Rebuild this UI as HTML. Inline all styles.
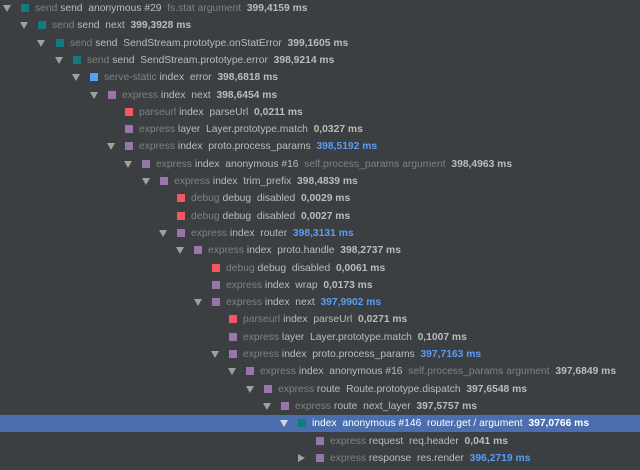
<!DOCTYPE html>
<html><head><meta charset="utf-8"><style>
html,body{margin:0;padding:0;background:#3c3f41;width:640px;height:470px;overflow:hidden}
body{font-family:"Liberation Sans",sans-serif;font-size:10.3px;color:#bbbbbb;position:relative}
.r{position:absolute;left:0;width:640px;height:17px;line-height:17px;white-space:pre}
.r.sel{background:#4b6eaf;color:#fff}
.t{position:absolute;top:5px;width:0;height:0;border-left:4px solid transparent;border-right:4px solid transparent;border-top:7px solid #a0a0a0}
.t.rt{top:4px;border-top:4px solid transparent;border-bottom:4px solid transparent;border-left:7px solid #a0a0a0;border-right:0}
.s{position:absolute;top:4px;width:8px;height:8px}
.x{position:absolute;top:0}
.g{color:#7f8284}
.sel .g{color:#ccd}
b{font-weight:bold}
.bl{color:#589df6}
.te{background:#137a7f}.pu{background:#9876aa}.re{background:#f75464}.bu{background:#589df6}
</style></head><body>
<div class="r" style="top:0px"><span class="t" style="left:3px"></span><span class="s te" style="left:21px"></span><span class="x" style="left:35px"><span class="g">send </span>send  anonymous #29  <span class="g">fs.stat argument</span>  <b>399,4159 ms</b></span></div>
<div class="r" style="top:17.3px"><span class="t" style="left:20px"></span><span class="s te" style="left:38px"></span><span class="x" style="left:52px"><span class="g">send </span>send  next  <b>399,3928 ms</b></span></div>
<div class="r" style="top:34.6px"><span class="t" style="left:37px"></span><span class="s te" style="left:56px"></span><span class="x" style="left:70px"><span class="g">send </span>send  SendStream.prototype.onStatError  <b>399,1605 ms</b></span></div>
<div class="r" style="top:51.9px"><span class="t" style="left:55px"></span><span class="s te" style="left:73px"></span><span class="x" style="left:87px"><span class="g">send </span>send  SendStream.prototype.error  <b>398,9214 ms</b></span></div>
<div class="r" style="top:69.2px"><span class="t" style="left:72px"></span><span class="s bu" style="left:90px"></span><span class="x" style="left:104px"><span class="g">serve-static </span>index  error  <b>398,6818 ms</b></span></div>
<div class="r" style="top:86.5px"><span class="t" style="left:90px"></span><span class="s pu" style="left:108px"></span><span class="x" style="left:122px"><span class="g">express </span>index  next  <b>398,6454 ms</b></span></div>
<div class="r" style="top:103.8px"><span class="s re" style="left:125px"></span><span class="x" style="left:139px"><span class="g">parseurl </span>index  parseUrl  <b>0,0211 ms</b></span></div>
<div class="r" style="top:121.1px"><span class="s pu" style="left:125px"></span><span class="x" style="left:139px"><span class="g">express </span>layer  Layer.prototype.match  <b>0,0327 ms</b></span></div>
<div class="r" style="top:138.4px"><span class="t" style="left:107px"></span><span class="s pu" style="left:125px"></span><span class="x" style="left:139px"><span class="g">express </span>index  proto.process_params  <b class="bl">398,5192 ms</b></span></div>
<div class="r" style="top:155.7px"><span class="t" style="left:124px"></span><span class="s pu" style="left:142px"></span><span class="x" style="left:156px"><span class="g">express </span>index  anonymous #16  <span class="g">self.process_params argument</span>  <b>398,4963 ms</b></span></div>
<div class="r" style="top:173px"><span class="t" style="left:142px"></span><span class="s pu" style="left:160px"></span><span class="x" style="left:174px"><span class="g">express </span>index  trim_prefix  <b>398,4839 ms</b></span></div>
<div class="r" style="top:190.3px"><span class="s re" style="left:177px"></span><span class="x" style="left:191px"><span class="g">debug </span>debug  disabled  <b>0,0029 ms</b></span></div>
<div class="r" style="top:207.6px"><span class="s re" style="left:177px"></span><span class="x" style="left:191px"><span class="g">debug </span>debug  disabled  <b>0,0027 ms</b></span></div>
<div class="r" style="top:224.9px"><span class="t" style="left:159px"></span><span class="s pu" style="left:177px"></span><span class="x" style="left:191px"><span class="g">express </span>index  router  <b class="bl">398,3131 ms</b></span></div>
<div class="r" style="top:242.2px"><span class="t" style="left:176px"></span><span class="s pu" style="left:194px"></span><span class="x" style="left:208px"><span class="g">express </span>index  proto.handle  <b>398,2737 ms</b></span></div>
<div class="r" style="top:259.5px"><span class="s re" style="left:212px"></span><span class="x" style="left:226px"><span class="g">debug </span>debug  disabled  <b>0,0061 ms</b></span></div>
<div class="r" style="top:276.8px"><span class="s pu" style="left:212px"></span><span class="x" style="left:226px"><span class="g">express </span>index  wrap  <b>0,0173 ms</b></span></div>
<div class="r" style="top:294.1px"><span class="t" style="left:194px"></span><span class="s pu" style="left:212px"></span><span class="x" style="left:226px"><span class="g">express </span>index  next  <b class="bl">397,9902 ms</b></span></div>
<div class="r" style="top:311.4px"><span class="s re" style="left:229px"></span><span class="x" style="left:243px"><span class="g">parseurl </span>index  parseUrl  <b>0,0271 ms</b></span></div>
<div class="r" style="top:328.7px"><span class="s pu" style="left:229px"></span><span class="x" style="left:243px"><span class="g">express </span>layer  Layer.prototype.match  <b>0,1007 ms</b></span></div>
<div class="r" style="top:346px"><span class="t" style="left:211px"></span><span class="s pu" style="left:229px"></span><span class="x" style="left:243px"><span class="g">express </span>index  proto.process_params  <b class="bl">397,7163 ms</b></span></div>
<div class="r" style="top:363.3px"><span class="t" style="left:228px"></span><span class="s pu" style="left:246px"></span><span class="x" style="left:260px"><span class="g">express </span>index  anonymous #16  <span class="g">self.process_params argument</span>  <b>397,6849 ms</b></span></div>
<div class="r" style="top:380.6px"><span class="t" style="left:246px"></span><span class="s pu" style="left:264px"></span><span class="x" style="left:278px"><span class="g">express </span>route  Route.prototype.dispatch  <b>397,6548 ms</b></span></div>
<div class="r" style="top:397.9px"><span class="t" style="left:263px"></span><span class="s pu" style="left:281px"></span><span class="x" style="left:295px"><span class="g">express </span>route  next_layer  <b>397,5757 ms</b></span></div>
<div class="r sel" style="top:415.2px"><span class="t" style="left:280px;border-top-color:#d0d8e8"></span><span class="s te" style="left:298px"></span><span class="x" style="left:312px">index  anonymous #146  router.get / argument  <b>397,0766 ms</b></span></div>
<div class="r" style="top:432.5px"><span class="s pu" style="left:316px"></span><span class="x" style="left:330px"><span class="g">express </span>request  req.header  <b>0,041 ms</b></span></div>
<div class="r" style="top:449.8px"><span class="t rt" style="left:298px"></span><span class="s pu" style="left:316px"></span><span class="x" style="left:330px"><span class="g">express </span>response  res.render  <b class="bl">396,2719 ms</b></span></div>
</body></html>
